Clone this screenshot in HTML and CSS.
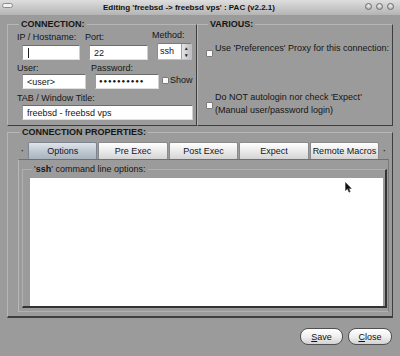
FILE: index.html
```html
<!DOCTYPE html>
<html lang="en">
<head>
  <meta charset="UTF-8" />
  <title>Editing 'freebsd -> freebsd vps' : PAC (v2.2.1)</title>
  <link rel="stylesheet" href="styles.css">
</head>
<body>
  <div class="window">

    <div class="titlebar">
      <span class="pill"></span>
      <span class="title">Editing 'freebsd -&gt; freebsd vps' : PAC (v2.2.1)</span>
      <span class="lights"><i></i><i></i><i></i></span>
    </div>

    <div class="top">
      <fieldset class="frame connection">
        <legend>CONNECTION:</legend>
        <div class="row first">
          <div class="field ip">
            <label>IP / Hostname:</label>
            <div class="entry"><span class="caret"></span></div>
          </div>
          <div class="field port">
            <label>Port:</label>
            <div class="entry">22</div>
          </div>
          <div class="field method">
            <label>Method:</label>
            <div class="select">
              <span>ssh</span>
              <span class="spin"><b>&#9652;</b><b>&#9662;</b></span>
            </div>
          </div>
        </div>
        <div class="row second">
          <div class="field user">
            <label>User:</label>
            <div class="entry">&lt;user&gt;</div>
          </div>
          <div class="field pass">
            <label>Password:</label>
            <div class="entry dots">&#9679;&#9679;&#9679;&#9679;&#9679;&#9679;&#9679;&#9679;&#9679;&#9679;</div>
          </div>
          <div class="check show"><span class="box"></span>Show</div>
        </div>
        <div class="row third">
          <div class="field title-field">
            <label>TAB / Window Title:</label>
            <div class="entry">freebsd - freebsd vps</div>
          </div>
        </div>
      </fieldset>

      <fieldset class="frame various">
        <legend>VARIOUS:</legend>
        <div class="check proxy"><span class="box"></span><span>Use 'Preferences' Proxy for this connection:</span></div>
        <div class="check noauto"><span class="box"></span><span>Do NOT autologin nor check 'Expect'<br>(Manual user/password login)</span></div>
      </fieldset>
    </div>

    <fieldset class="frame props">
      <legend>CONNECTION PROPERTIES:</legend>
      <div class="tabs">
        <span class="scroll">&middot;</span>
        <span class="tab active">Options</span>
        <span class="tab">Pre Exec</span>
        <span class="tab">Post Exec</span>
        <span class="tab">Expect</span>
        <span class="tab">Remote Macros</span>
        <span class="scroll">&middot;</span>
      </div>
      <div class="page">
        <fieldset class="frame options">
          <legend>'<b>ssh</b>' command line options:</legend>
          <div class="textarea">
            <svg class="pointer" width="7" height="11" viewBox="0 0 7 11">
              <path d="M0.5 0.5 L0.5 8.5 L2.5 6.8 L4 10.2 L5.2 9.6 L3.8 6.4 L6.3 6.4 Z" fill="#111" stroke="#444" stroke-width="0.6"/>
            </svg>
          </div>
        </fieldset>
      </div>
    </fieldset>

    <div class="actions">
      <button class="save"><u>S</u>ave</button>
      <button class="close"><u>C</u>lose</button>
    </div>

  </div>
</body>
</html>
```

FILE: styles.css
```css
* { box-sizing: border-box; }

body {
  margin: 0;
  font-family: 'Liberation Sans', Arial, sans-serif;
  font-size: 9px;
  color: #151515;
}

.window {
  width: 400px;
  height: 356px;
  background-color: #9b9b9b;
  display: flex;
  flex-direction: column;
  overflow: hidden;
}

/* title bar */

.titlebar {
  height: 15px;
  flex-shrink: 0;
  background: linear-gradient(#dedede, #b4b4b4);
  display: flex;
  align-items: center;
  justify-content: space-between;
  padding: 0 6px 0 2px;
}

.titlebar .title {
  font-weight: bold;
  font-size: 8px;
  color: #111;
}

.pill {
  width: 11px;
  height: 5px;
  margin-top: -4px;
  border-radius: 3px;
  border: 1px solid #8a8a8a;
  background: #f2f2f2;
}

.lights {
  display: flex;
  gap: 4px;
  margin-top: -2px;
}

.lights i {
  width: 7px;
  height: 7px;
  border-radius: 50%;
  border: 1px solid #6d6d6d;
  background: radial-gradient(circle at 50% 30%, #f0f0f0, #a6a6a6);
}

/* frames */

.frame {
  margin: 0;
  padding: 0;
  min-width: 0;
  border: 1px solid;
  border-color: #b6b6b6 #3e3e3e #3e3e3e #b6b6b6;
}

.frame legend {
  padding: 0 2px;
  margin-left: 2px;
  font-weight: bold;
  line-height: 10px;
}

.top {
  display: grid;
  grid-template-columns: 190px 196px;
  margin: 4px 0 0 7px;
}

/* connection */

.connection {
  padding: 1px 0 5px 9px;
}

.row {
  display: flex;
  align-items: flex-end;
}

.row.second { margin-top: 3px; }
.row.third { margin-top: 4px; }

.field {
  display: flex;
  flex-direction: column;
}

.field label {
  line-height: 11px;
  margin-bottom: 2px;
}

.ip { width: 68px; }
.port { width: 67px; }
.user { width: 74px; }
.pass { width: 71px; }

.entry {
  margin-left: 5px;
  height: 15px;
  padding: 0 4px;
  line-height: 14px;
  background: #fff;
  border: 1px solid;
  border-color: #6c6c6c #cfcfcf #e0e0e0 #9c9c9c;
  white-space: nowrap;
  overflow: hidden;
}

.port .entry { margin-left: 4px; }
.pass .entry { margin-left: 4px; }

.ip .entry { width: 58px; }
.port .entry { width: 59px; }
.user .entry { width: 64px; }
.pass .entry { width: 64px; }
.title-field .entry { width: 171px; }

.second .field label { margin-bottom: 0; }
.third .field label { margin-bottom: 1px; }

.caret {
  display: inline-block;
  width: 1px;
  height: 10px;
  margin: 2px 0 0 1px;
  background: #222;
  vertical-align: top;
}

.dots {
  font-size: 6px;
  letter-spacing: 0.9px;
  line-height: 13px;
  padding-left: 3px;
  color: #111;
}

.select {
  margin-left: 5px;
  width: 35px;
  height: 17px;
  display: flex;
  background: #fff;
  border: 1px solid;
  border-color: #7a7a7a #c0c0c0 #c0c0c0 #8e8e8e;
  border-radius: 2px;
}

.select span:first-child {
  flex-grow: 1;
  padding-left: 2px;
  line-height: 15px;
}

.spin {
  width: 10px;
  display: flex;
  flex-direction: column;
  align-items: center;
  justify-content: space-between;
  padding: 1px 0;
  background: linear-gradient(90deg, #e4e4e4, #bdbdbd);
  border-left: 1px solid #a0a0a0;
}

.spin b {
  font-size: 5px;
  line-height: 6px;
  color: #222;
}

/* check buttons */

.check {
  display: flex;
  align-items: center;
  white-space: nowrap;
}

.check .box {
  flex-shrink: 0;
  width: 7px;
  height: 7px;
  margin-right: 2px;
  background: #fafafa;
  border: 1px solid #7c7c7c;
  border-radius: 1px;
}

.show {
  margin-left: 0;
  margin-bottom: 4px;
}

.show .box { margin-right: 1px; }

/* various */

.various {
  padding: 10px 0 0 8px;
}

.various .check {
  line-height: 13px;
}

.proxy .box { margin-top: 11px; }

.noauto {
  margin-top: 34px;
}

.noauto .box { margin-top: 2px; }

/* properties */

.props {
  margin: 1px 7px 0 7px;
  padding: 5px 3px 4px 10px;
  border-bottom-width: 2px;
}

.tabs {
  display: flex;
  align-items: center;
  gap: 1px;
  height: 17px;
}

.scroll {
  width: 9px;
  text-align: center;
  font-weight: bold;
  color: #333;
}

.tab {
  width: 70px;
  height: 17px;
  text-align: center;
  line-height: 16px;
  background: linear-gradient(#ffffff, #e6e6e6 60%, #d4d4d4);
  border: 1px solid #8a8a8a;
  border-bottom: none;
  border-radius: 2px 2px 0 0;
}

.tab.active {
  background: linear-gradient(#dfe4ea, #bcc6d0 55%, #aab4be);
  border-color: #7d8690;
}

.page {
  height: 153px;
  padding: 4px 1px 3px 3px;
  border: 1px solid;
  border-color: #707070 #7a7a7a #b0b0b0 #b8b8b8;
}

.options {
  height: 100%;
  padding: 4px 2px 0 7px;
  border-right-width: 2px;
  border-bottom-width: 2px;
  border-color: #b0b0b0 #333 #333 #b0b0b0;
}

.options legend {
  font-weight: normal;
}

.textarea {
  position: relative;
  height: 128px;
  background: #fff;
}

.pointer {
  position: absolute;
  left: 315px;
  top: 4px;
}

/* buttons */

.actions {
  display: flex;
  justify-content: flex-end;
  gap: 5px;
  padding: 10px 8px 0 0;
}

.actions button {
  height: 17px;
  padding: 0;
  font-family: inherit;
  font-size: 9px;
  color: #111;
  background: linear-gradient(#ffffff, #f0f0f0 50%, #d2d2d2);
  border: 1px solid #505050;
  border-radius: 8px;
}

.save { width: 43px; }
.close { width: 44px; }
```
